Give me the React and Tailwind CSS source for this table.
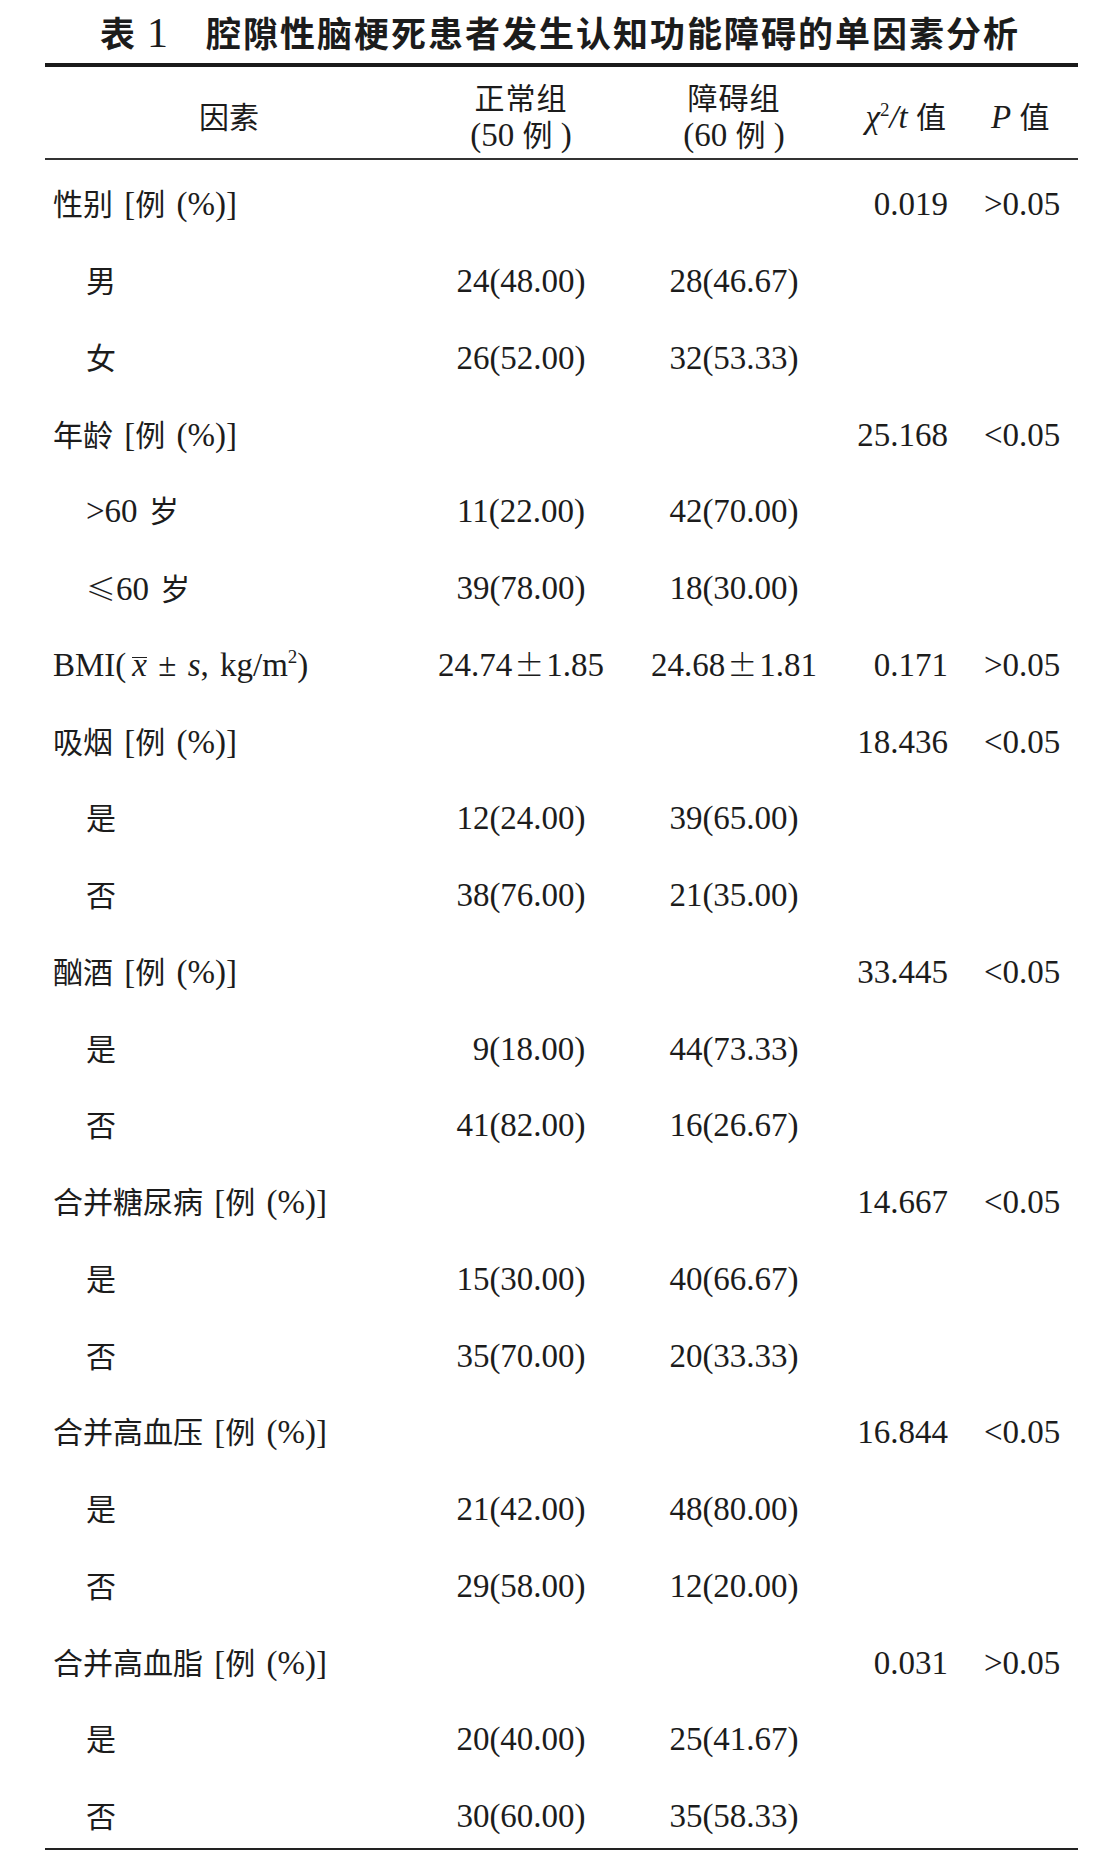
import React from "react";

const serif = "font-['Liberation_Serif','Noto_Sans_CJK_SC',serif]";

const rows = [
  { label: "性别 [例 (%)]", stat: "0.019", p: ">0.05" },
  { label: "男", sub: true, a: "24(48.00)", b: "28(46.67)" },
  { label: "女", sub: true, a: "26(52.00)", b: "32(53.33)" },
  { label: "年龄 [例 (%)]", stat: "25.168", p: "<0.05" },
  { label: ">60 岁", sub: true, a: "11(22.00)", b: "42(70.00)" },
  { label: "≤60 岁", sub: true, a: "39(78.00)", b: "18(30.00)", le: true },
  { label: "BMI", bmi: true, a: "24.74|1.85", b: "24.68|1.81", stat: "0.171", p: ">0.05" },
  { label: "吸烟 [例 (%)]", stat: "18.436", p: "<0.05" },
  { label: "是", sub: true, a: "12(24.00)", b: "39(65.00)" },
  { label: "否", sub: true, a: "38(76.00)", b: "21(35.00)" },
  { label: "酗酒 [例 (%)]", stat: "33.445", p: "<0.05" },
  { label: "是", sub: true, a: "9(18.00)", b: "44(73.33)", padA: true },
  { label: "否", sub: true, a: "41(82.00)", b: "16(26.67)" },
  { label: "合并糖尿病 [例 (%)]", stat: "14.667", p: "<0.05" },
  { label: "是", sub: true, a: "15(30.00)", b: "40(66.67)" },
  { label: "否", sub: true, a: "35(70.00)", b: "20(33.33)" },
  { label: "合并高血压 [例 (%)]", stat: "16.844", p: "<0.05" },
  { label: "是", sub: true, a: "21(42.00)", b: "48(80.00)" },
  { label: "否", sub: true, a: "29(58.00)", b: "12(20.00)" },
  { label: "合并高血脂 [例 (%)]", stat: "0.031", p: ">0.05" },
  { label: "是", sub: true, a: "20(40.00)", b: "25(41.67)" },
  { label: "否", sub: true, a: "30(60.00)", b: "35(58.33)" },
];

// CJK glyphs are set a little smaller than the latin serif text
function Mix({ text }) {
  const parts = text.split(/([\u4e00-\u9fff]+)/);
  return (
    <>
      {parts.map((p, i) =>
        /[\u4e00-\u9fff]/.test(p) ? (
          <span key={i} className="text-[30px]">
            {p}
          </span>
        ) : (
          <React.Fragment key={i}>{p}</React.Fragment>
        )
      )}
    </>
  );
}

function Value({ v }) {
  if (!v) return null;
  // mean ± sd values use the wide CJK plus-minus sign
  if (v.includes("|")) {
    const [m, s] = v.split("|");
    return (
      <span>
        {m}
        <span className="font-['Noto_Sans_CJK_SC',sans-serif] font-light text-[30px] mx-[2px]">±</span>
        {s}
      </span>
    );
  }
  return <span>{v}</span>;
}

function Label({ row }) {
  if (row.bmi) {
    return (
      <span>
        BMI(
        <span className="italic inline-block leading-[15px] border-t-[1.5px] border-[#1f1f1f] ml-[6px]">x</span> ±{" "}
        <span className="italic">s</span>, kg/m
        <sup className="text-[19px] -top-[13px]">2</sup>)
      </span>
    );
  }
  if (row.le) {
    return (
      <span>
        <span className="font-['Noto_Sans_CJK_SC',sans-serif] font-light text-[30px]">≤</span>60{" "}
        <span className="text-[30px]">岁</span>
      </span>
    );
  }
  return <Mix text={row.label} />;
}

export default function App() {
  const cols = "grid grid-cols-[385px_182px_244px_92px_130px]";

  return (
    <div className={`w-[1120px] bg-white text-[#1c1c1c] ${serif}`}>
      {/* Title */}
      <div className="h-[63px] flex items-center justify-center">
        <span className="font-['Noto_Sans_CJK_SC',sans-serif] font-bold text-[35px] leading-none">表</span>
        <span className="font-['Liberation_Serif',serif] text-[42px] leading-none ml-[12px] mt-[2px]">1</span>
        <span className="font-['Noto_Sans_CJK_SC',sans-serif] font-bold text-[35px] leading-none tracking-[2px] ml-[38px]">
          腔隙性脑梗死患者发生认知功能障碍的单因素分析
        </span>
      </div>

      <div className="mx-[45px] w-[1033px] border-t-[4px] border-[#1a1a1a]">
        {/* Header */}
        <div className={`${cols} h-[93px] pt-[10px] items-center border-b-2 border-[#333] text-[33px] leading-[36px]`}>
          <div className="pl-[154px] text-[30px]">因素</div>
          <div className="text-center">
            <div className="text-[30px] tracking-[1px]">正常组</div>
            <div>
              <Mix text="(50 例 )" />
            </div>
          </div>
          <div className="text-center">
            <div className="text-[30px] tracking-[1px]">障碍组</div>
            <div>
              <Mix text="(60 例 )" />
            </div>
          </div>
          <div className="text-right whitespace-nowrap pr-[2px]">
            <span className="italic">χ</span>
            <sup className="text-[19px] -top-[12px]">2</sup>
            <span className="italic">/t</span> <span className="text-[30px]">值</span>
          </div>
          <div className="pl-[43px] whitespace-nowrap">
            <span className="italic">P</span> <span className="text-[30px]">值</span>
          </div>
        </div>

        {/* Body */}
        <div className="pt-[6.6px] border-b-2 border-[#222]">
          {rows.map((row, i) => (
            <div
              key={i}
              className={`${cols} items-center text-[33px] leading-none ${
                i === rows.length - 1 ? "h-[69.4px] pt-[7.4px]" : "h-[76.76px]"
              }`}
            >
              <div className={`whitespace-nowrap [word-spacing:3px] ${row.sub ? "pl-[41px]" : "pl-[8px]"}`}>
                <Label row={row} />
              </div>
              <div className={`text-center whitespace-nowrap ${row.padA ? "pl-[16px]" : ""}`}>
                <Value v={row.a} />
              </div>
              <div className="text-center whitespace-nowrap">
                <Value v={row.b} />
              </div>
              <div className="text-right whitespace-nowrap">{row.stat}</div>
              <div className="pl-[36px] whitespace-nowrap">{row.p}</div>
            </div>
          ))}
        </div>
      </div>
    </div>
  );
}
